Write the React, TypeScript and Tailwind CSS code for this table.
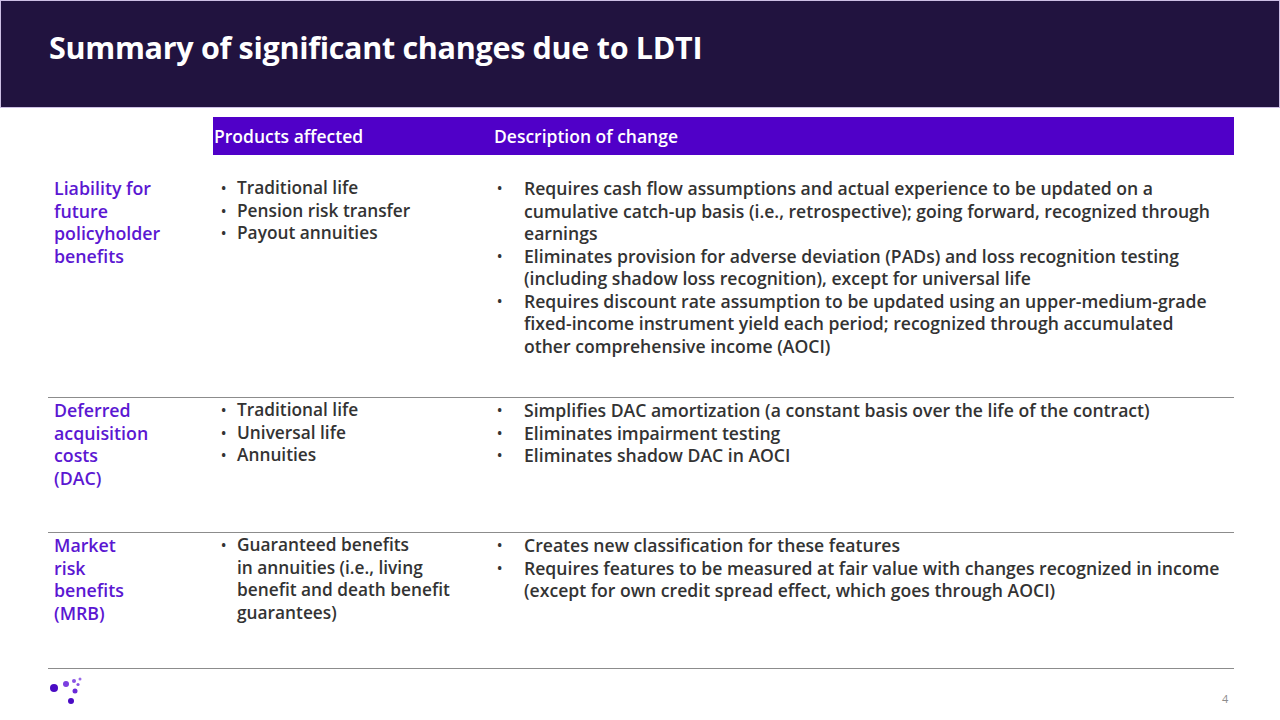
const rows = [
  {
    label: ['Liability for', 'future', 'policyholder', 'benefits'],
    products: [['Traditional life'], ['Pension risk transfer'], ['Payout annuities']],
    changes: [
      [
        'Requires cash flow assumptions and actual experience to be updated on a',
        'cumulative catch-up basis (i.e., retrospective); going forward, recognized through',
        'earnings',
      ],
      [
        'Eliminates provision for adverse deviation (PADs) and loss recognition testing',
        '(including shadow loss recognition), except for universal life',
      ],
      [
        'Requires discount rate assumption to be updated using an upper-medium-grade',
        'fixed-income instrument yield each period; recognized through accumulated',
        'other comprehensive income (AOCI)',
      ],
    ],
    height: 'h-[242px] pt-[22px]',
  },
  {
    label: ['Deferred', 'acquisition', 'costs', '(DAC)'],
    products: [['Traditional life'], ['Universal life'], ['Annuities']],
    changes: [
      ['Simplifies DAC amortization (a constant basis over the life of the contract)'],
      ['Eliminates impairment testing'],
      ['Eliminates shadow DAC in AOCI'],
    ],
    height: 'h-[135px] pt-px',
  },
  {
    label: ['Market', 'risk', 'benefits', '(MRB)'],
    products: [['Guaranteed benefits', 'in annuities (i.e., living', 'benefit and death benefit', 'guarantees)']],
    changes: [
      ['Creates new classification for these features'],
      [
        'Requires features to be measured at fair value with changes recognized in income',
        '(except for own credit spread effect, which goes through AOCI)',
      ],
    ],
    height: 'h-[136px] pt-px',
  },
]

function Logo() {
  return (
    <svg width="40" height="34" viewBox="0 0 40 34">
      <circle cx="6" cy="12" r="4" fill="#4a0bc4" />
      <circle cx="18" cy="8" r="3" fill="#7b3ee0" />
      <circle cx="26" cy="5" r="2" fill="#8a52e4" />
      <circle cx="32" cy="3" r="1.5" fill="#9a6ae8" />
      <circle cx="30" cy="8.5" r="1.6" fill="#8a52e4" />
      <circle cx="27" cy="15" r="2.5" fill="#6a2ad8" />
      <circle cx="23" cy="25" r="3" fill="#4a0bc4" />
    </svg>
  )
}

function Bullet({ w }: { w: string }) {
  return <span className={`${w} shrink-0 text-[14px] leading-[22.5px]`}>•</span>
}

export default function App() {
  return (
    <div className="w-[1280px] h-[720px] bg-white relative overflow-hidden font-['Open_Sans',sans-serif] text-[#333333]">
      <div className="h-[108px] bg-[#21133f] border border-[#cdbfe4] flex items-center pl-[48px] pb-[12px]">
        <h1 className="text-white text-[30.5px] font-bold tracking-[-0.3px]">
          Summary of significant changes due to LDTI
        </h1>
      </div>

      <div className="ml-[48px] w-[1186px] mt-[9px]">
        <div className="grid grid-cols-[165px_267px_754px]">
          <div />
          <div className="bg-[#5000c8] h-[38px] flex items-center text-white text-[17.5px] font-semibold pl-[1px]">
            Products affected
          </div>
          <div className="bg-[#5000c8] h-[38px] flex items-center text-white text-[17.5px] font-semibold pl-[14px]">
            Description of change
          </div>
        </div>

        {rows.map((row, i) => (
          <div
            key={i}
            className={`grid grid-cols-[165px_267px_754px] text-[17.3px] leading-[22.5px] font-semibold ${row.height} ${i > 0 ? 'border-t border-[#8c8c8c]' : ''}`}
          >
            <div className="pl-[6px] text-[#5b17d2] text-[17.8px]">
              {row.label.map((l) => (
                <div key={l}>{l}</div>
              ))}
            </div>
            <ul className="pl-[8px]">
              {row.products.map((p) => (
                <li key={p[0]} className="flex">
                  <Bullet w="w-[16px]" />
                  <span className="whitespace-nowrap">
                    {p.map((line) => (
                      <div key={line}>{line}</div>
                    ))}
                  </span>
                </li>
              ))}
            </ul>
            <ul className="pl-[17px] text-[17.6px]">
              {row.changes.map((c) => (
                <li key={c[0]} className="flex">
                  <Bullet w="w-[27px]" />
                  <span className="whitespace-nowrap">
                    {c.map((line) => (
                      <div key={line}>{line}</div>
                    ))}
                  </span>
                </li>
              ))}
            </ul>
          </div>
        ))}
        <div className="border-t border-[#8c8c8c]" />
      </div>

      <div className="absolute left-[48px] top-[676px]">
        <Logo />
      </div>
      <div className="absolute left-[1222px] top-[691px] text-[11px] text-[#8c8c8c]">4</div>
    </div>
  )
}
